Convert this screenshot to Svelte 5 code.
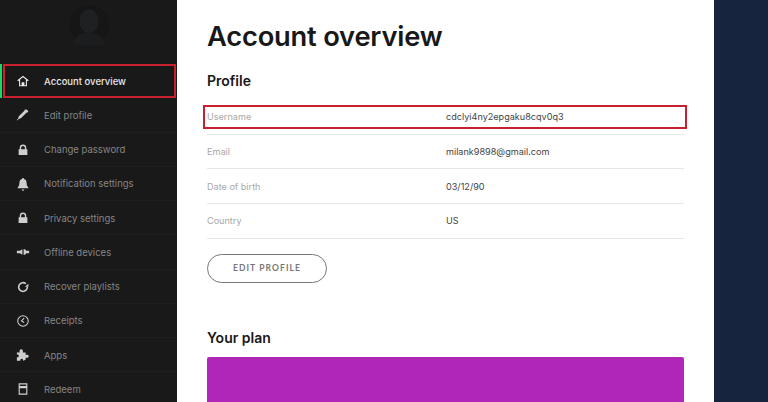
<script>
  const nav = [
    { label: 'Account overview', icon: 'home', active: true },
    { label: 'Edit profile', icon: 'pen' },
    { label: 'Change password', icon: 'lock' },
    { label: 'Notification settings', icon: 'bell' },
    { label: 'Privacy settings', icon: 'lock' },
    { label: 'Offline devices', icon: 'devices' },
    { label: 'Recover playlists', icon: 'recover' },
    { label: 'Receipts', icon: 'clock' },
    { label: 'Apps', icon: 'puzzle' },
    { label: 'Redeem', icon: 'redeem' }
  ];

  const profile = [
    { label: 'Username', value: 'cdclyi4ny2epgaku8cqv0q3', marked: true },
    { label: 'Email', value: 'milank9898@gmail.com' },
    { label: 'Date of birth', value: '03/12/90' },
    { label: 'Country', value: 'US' }
  ];
</script>

<div class="page">
  <aside class="sidebar">
    <div class="avatar">
      <svg viewBox="0 0 40 40" width="40" height="40" aria-hidden="true">
        <circle cx="20" cy="20" r="20" fill="#161616" />
        <ellipse cx="20" cy="16" rx="9.5" ry="12" fill="#1e2022" />
        <path d="M4 37c3-7 9-9 16-9s13 2 16 9a20 20 0 0 1-32 0z" fill="#1c1d1f" />
      </svg>
    </div>
    <nav>
      {#each nav as item}
        <a href="#top" class="item" class:active={item.active}>
          <svg class="icon" viewBox="0 0 16 16" width="14" height="14" aria-hidden="true">
            {#if item.icon === 'home'}
              <path d="M8 2 1.500 7.200l.8 1L3.500 7.300V14h9V7.300l1.200.9.8-1zM4.700 6.400 8 3.700l3.300 2.700v6.400H9.600V9.500H6.400v3.300H4.700z" fill="currentColor" />
            {:else if item.icon === 'pen'}
              <path d="M12.200 1.800l2 2-1.300 1.700-.7-.5-6.600 6.800-2.600.8-1.600 1.600-.5-.5 1.500-1.700.8-2.600 6.700-6.600-.4-.7z" fill="currentColor" />
            {:else if item.icon === 'lock'}
              <path d="M4.300 7V5.400a3.700 3.700 0 0 1 7.400 0V7H13v6.600H3V7zm1.600 0h4.200V5.400a2.100 2.100 0 0 0-4.200 0z" fill="currentColor" />
            {:else if item.icon === 'bell'}
              <path d="M8 1.200c.7 0 1.100.5 1.100 1.100 2 .5 3 2.200 3 4.300 0 2.600.6 3.900 1.900 5.200v1H2v-1c1.300-1.300 1.900-2.600 1.900-5.200 0-2.100 1-3.800 3-4.300C6.900 1.700 7.300 1.200 8 1.200zM6.500 14.200h3a1.500 1.500 0 0 1-3 0z" fill="currentColor" />
            {:else if item.icon === 'devices'}
              <path d="M1 6.500h3.500L7.300 4.800v6.400L4.500 9.500H1zM8.700 4.800h1.800l1 1.700H15v3h-3.500l-1 1.700H8.700z" fill="currentColor" />
            {:else if item.icon === 'recover'}
              <path d="M13 8a5 5 0 1 1-1.700-3.700" fill="none" stroke="currentColor" stroke-width="1.800" />
              <path d="M10 6.300h4.200V2.700z" fill="currentColor" transform="translate(0 1.500)" />
            {:else if item.icon === 'clock'}
              <circle cx="8" cy="8" r="6" fill="none" stroke="currentColor" stroke-width="1.200" />
              <path d="M9.300 4.800 6.300 8l3 1.800" fill="none" stroke="currentColor" stroke-width="1.200" />
            {:else if item.icon === 'puzzle'}
              <path d="M1 5h3.200C3.800 3.500 4.300 1.500 6 1.500S8.200 3.500 7.800 5H11v3c1.500-.5 3.500-.2 3.500 1.500S12.500 11.500 11 11v2.500l-3 1c.3-1.300-.3-2.300-1.500-2.300S4.800 13.200 5 14.500H1v-4c1.300.3 2.200-.3 2.200-1.500S2.300 7.200 1 7.500z" fill="currentColor" />
            {:else if item.icon === 'redeem'}
              <path d="M3 1.500h10v13H3zm1.300 1.300v1.900h7.400V2.800zm0 4.200v6.200h7.400V7z" fill="currentColor" fill-rule="evenodd" />
            {/if}
          </svg>
          <span>{item.label}</span>
        </a>
      {/each}
    </nav>
  </aside>

  <main class="content">
    <h1>Account overview</h1>
    <h2 class="profile">Profile</h2>
    <div class="rows">
      {#each profile as row}
        <div class="row" class:marked={row.marked}>
          <span class="label">{row.label}</span>
          <span class="value">{row.value}</span>
        </div>
      {/each}
    </div>
    <button class="edit" type="button">EDIT PROFILE</button>
    <h2 class="plan">Your plan</h2>
    <div class="plan-card"></div>
  </main>

  <div class="backdrop"></div>
</div>

<style>
  :global(body) {
    margin: 0;
    background: #17243d;
    font-family: Inter, "Open Sans", sans-serif;
  }

  .page {
    display: flex;
    height: 402px;
    overflow: hidden;
  }

  .sidebar {
    flex: 0 0 177px;
    background: #191919;
  }

  .avatar {
    display: flex;
    justify-content: center;
    height: 64px;
    padding-top: 5px;
    box-sizing: border-box;
  }

  .item {
    position: relative;
    display: flex;
    align-items: center;
    gap: 14px;
    height: 34.25px;
    padding-left: 16px;
    color: #858585;
    font-size: 9.5px;
    font-weight: 400;
    text-decoration: none;
    box-shadow: inset 0 -1px 0 #1e1e1e;
  }

  .icon {
    flex: 0 0 14px;
    color: #cfcfcf;
  }

  .item.active {
    color: #e8e8e8;
    font-weight: 500;
    box-shadow: inset 2px 0 0 #1ed760;
  }

  .item.active .icon {
    color: #ededed;
  }

  /* red annotation drawn over the screenshot */
  .item.active::after {
    content: '';
    position: absolute;
    inset: 0 1px 0 3px;
    border: 2px solid #c8202c;
    box-sizing: border-box;
  }

  .content {
    flex: 0 0 537px;
    box-sizing: border-box;
    padding: 0 30px;
    background: #fff;
    color: #181818;
  }

  h1 {
    margin: 19px 0 0;
    font-size: 27.3px;
    line-height: 36px;
    font-weight: 600;
    letter-spacing: -0.2px;
  }

  h2 {
    margin: 0;
    font-size: 14px;
    line-height: 18px;
    font-weight: 600;
  }

  .profile {
    margin-top: 17px;
  }

  .rows {
    margin-top: 10px;
  }

  .row {
    position: relative;
    display: flex;
    align-items: center;
    height: 34.7px;
    box-sizing: border-box;
    border-bottom: 1px solid #e6e6e6;
    font-size: 9.1px;
  }

  .label {
    flex: 0 0 239px;
    color: #a8a8a8;
  }

  .value {
    color: #444;
  }

  /* red annotation drawn over the screenshot */
  .row.marked::after {
    content: '';
    position: absolute;
    inset: 5px -3px 5px -4px;
    border: 2px solid #c8202c;
    box-sizing: border-box;
  }

  .edit {
    display: block;
    width: 120px;
    height: 29px;
    margin-top: 15px;
    padding: 0;
    border: 1px solid #777;
    border-radius: 15px;
    background: #fff;
    color: #777;
    font-family: Lato, sans-serif;
    font-size: 8.5px;
    font-weight: 700;
    letter-spacing: 1.1px;
  }

  .plan {
    margin-top: 46px;
  }

  .plan-card {
    height: 60px;
    margin-top: 10px;
    border-radius: 2px 2px 0 0;
    background: #b027b8;
  }

  .backdrop {
    flex: 1;
    background: #17243d;
  }
</style>
